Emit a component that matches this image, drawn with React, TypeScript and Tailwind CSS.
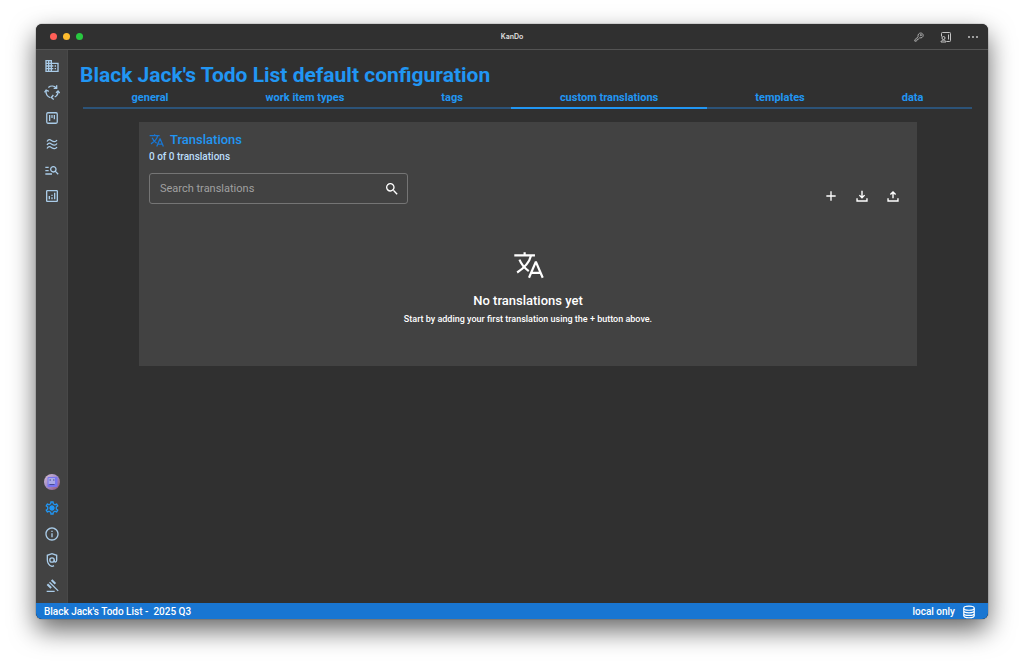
import type { ReactNode } from 'react';
import { MdAdd, MdDomain, MdManageSearch, MdOutlineAnalytics, MdOutlineInfo, MdOutlineSettings, MdSearch } from 'react-icons/md';

interface IconProps {
  className?: string;
  width?: number;
  children: ReactNode;
}

function Icon({ className, width = 2, children }: IconProps) {
  return (
    <svg className={className} viewBox="0 0 24 24" fill="none" stroke="currentColor" strokeWidth={width} aria-hidden="true">
      {children}
    </svg>
  );
}

function TranslateIcon({ className, width }: { className?: string; width?: number }) {
  return (
    <Icon className={className} width={width}>
      <path d="M1 4.2h16M9 1.8v2.4M14 4.2C12.8 9 8.5 14 3.2 17.4M5 7.5c1.6 4 4 6.6 7.2 8.8M12.4 21.5l5.1-12h.4L23 21.5M14.2 17.7h7" />
    </Icon>
  );
}

function CycleIcon({ className }: { className?: string }) {
  return (
    <Icon className={className}>
      <path d="M6.500 5.200A9 9 0 0 1 18.500 6M21 11.500A9 9 0 0 1 16 19.500M9.500 20.500A9 9 0 0 1 3.200 10" />
      <path d="M.8 12.500 3.200 9l4 2M19 2v4.500h-4.500M14 16.500l-3 3.800 3.500 3M18 13l3-2.500 2.500 3" />
    </Icon>
  );
}

function BoardIcon({ className }: { className?: string }) {
  return (
    <Icon className={className} width={2.2}>
      <rect x="3" y="3" width="18" height="18" rx="2" />
      <path d="M8 7v10M12 7v5M16 7v7" />
    </Icon>
  );
}

function WavesIcon({ className }: { className?: string }) {
  return (
    <Icon className={className} width={2.6}>
      <path d="M2 7c3-5 6-4 9.500-1.500S19 8.500 22 4M2 14c3-5 6-4 9.500-1.500S19 15.500 22 11M2 21c3-5 6-4 9.500-1.500S19 22.500 22 18" />
    </Icon>
  );
}

function GearIcon({ className }: { className?: string }) {
  return (
    <svg className={className} viewBox="0 0 24 24" aria-hidden="true">
      <MdOutlineSettings size={24} />
      <circle cx="12" cy="12" r="3.5" fill="currentColor" />
    </svg>
  );
}

function PrivacyIcon({ className }: { className?: string }) {
  return (
    <Icon className={className}>
      <path d="M15 20.500c-1 .6-2 .9-3 1-4.500-1.500-7-5.500-7-10V5l7-2.500L19 5v7.500c0 3-3.500 3.500-3.500.5v-1.500" />
      <circle cx="12" cy="12" r="3.3" />
    </Icon>
  );
}

function GavelIcon({ className }: { className?: string }) {
  return (
    <svg className={className} viewBox="0 -960 960 960" fill="currentColor" aria-hidden="true">
      <path d="M160-120v-80h480v80H160Zm226-194L160-540l84-86 228 226-86 86Zm254-254L414-796l86-84 226 226-86 86Zm184 408L302-682l56-56 522 522-56 56Z" />
    </svg>
  );
}

function TrayIcon({ className, up = false }: { className?: string; up?: boolean }) {
  return (
    <Icon className={className} width={2.4}>
      <path d={up ? 'M12 16V5M7.500 9.500 12 5l4.500 4.500' : 'M12 3v12M7.500 10.500 12 15l4.500-4.500'} />
      <path d="M3.500 16v4.500h17V16" />
    </Icon>
  );
}

function DatabaseIcon({ className }: { className?: string }) {
  return (
    <Icon className={className}>
      <ellipse cx="12" cy="5.5" rx="9" ry="3.5" />
      <path d="M3 5.500v13c0 4.500 18 4.500 18 0v-13M3 10c0 4.500 18 4.500 18 0M3 14.500c0 4.500 18 4.500 18 0" />
    </Icon>
  );
}

function KeyIcon({ className }: { className?: string }) {
  return (
    <Icon className={className}>
      <path strokeLinejoin="round" d="M10 11.500C8.500 6 12 2.500 16 2.500c3.500 0 6 2.500 6 5.500 0 4.500-4 7-8.500 6L10 17.500H7.500V20L5 22H2v-3.500z" />
      <circle cx="16.5" cy="7.5" r="1.5" />
    </Icon>
  );
}

function PanelIcon({ className }: { className?: string }) {
  return (
    <Icon className={className}>
      <path d="M3 11V5c0-1.500.5-2 2-2h14c1.500 0 2 .5 2 2v14c0 1.500-.5 2-2 2h-6M17 7v10" />
      <circle cx="7" cy="14" r="3" />
      <path d="M2 22c0-5 10-5 10 0z" />
    </Icon>
  );
}

function Avatar() {
  return (
    <svg className="size-4" viewBox="0 0 16 16" aria-hidden="true">
      <defs>
        <linearGradient id="avatar" x1="0" y1="0" x2="1" y2="1">
          <stop offset="0" stopColor="#d9bfd0" />
          <stop offset="0.5" stopColor="#a08bc8" />
          <stop offset="1" stopColor="#9a5269" />
        </linearGradient>
      </defs>
      <circle cx="8" cy="8" r="8" fill="url(#avatar)" />
      <rect x="3.5" y="3" width="10" height="10" rx="1" fill="#7774ef" />
      <rect x="4.5" y="4" width="6.5" height="6" fill="#a9a9e6" />
      <path d="M5.500 6h1.500M9 6h1.500M5.500 10.500h5" stroke="#484b95" />
    </svg>
  );
}

const topNav = [
  { label: 'Projects', icon: <MdDomain className="size-4" /> },
  { label: 'Iterations', icon: <CycleIcon className="size-4" /> },
  { label: 'Board', icon: <BoardIcon className="size-3.5" /> },
  { label: 'Flow', icon: <WavesIcon className="size-3" /> },
  { label: 'Search', icon: <MdManageSearch className="size-4" /> },
  { label: 'Analytics', icon: <MdOutlineAnalytics className="size-4" /> },
];

const bottomNav = [
  { label: 'Profile', icon: <Avatar /> },
  { label: 'Settings', icon: <GearIcon className="size-4 text-[#2196f3]" /> },
  { label: 'About', icon: <MdOutlineInfo className="size-4" /> },
  { label: 'Privacy', icon: <PrivacyIcon className="size-4" /> },
  { label: 'Legal', icon: <GavelIcon className="size-4" /> },
];

const tabs = ['general', 'work item types', 'tags', 'custom translations', 'templates', 'data'];

function NavGroup({ items }: { items: typeof topNav }) {
  return (
    <div className="flex flex-col">
      {items.map((item) => (
        <button key={item.label} type="button" aria-label={item.label} className="flex h-[26px] items-center justify-center">
          {item.icon}
        </button>
      ))}
    </div>
  );
}

function TitleBar() {
  return (
    <header className="grid h-[26px] shrink-0 grid-cols-3 items-center border-b border-[#535353] px-[10px]">
      <div className="flex items-center gap-1.5 pl-1">
        <button type="button" aria-label="Close" className="size-[7px] rounded-full bg-[#ff5f57]" />
        <button type="button" aria-label="Minimize" className="size-[7px] rounded-full bg-[#febc2e]" />
        <button type="button" aria-label="Zoom" className="size-[7px] rounded-full bg-[#28c840]" />
      </div>
      <span className="pt-0.5 text-center font-[Inter] text-[7px] font-semibold text-[#e0e0e0]">KanDo</span>
      <div className="flex items-center justify-end gap-4 text-[#c4c4c4]">
        <button type="button" aria-label="Passwords"><KeyIcon className="size-2.5" /></button>
        <button type="button" aria-label="Side panel"><PanelIcon className="size-3" /></button>
        <button type="button" aria-label="More">
          <svg className="h-2 w-2.5" viewBox="0 0 10 8" fill="currentColor" aria-hidden="true">
            <circle cx="1" cy="4" r="1" />
            <circle cx="5" cy="4" r="1" />
            <circle cx="9" cy="4" r="1" />
          </svg>
        </button>
      </div>
    </header>
  );
}

function TranslationsCard() {
  return (
    <section className="mx-[71px] mt-[13px] bg-[#424242] px-[10px] pt-[10px] pb-[39px]">
      <h2 className="flex h-4 items-center gap-1.5 text-[13px] font-medium text-[#2196f3]">
        <TranslateIcon className="size-[15px] text-[#1976d2]" />
        Translations
      </h2>
      <p className="mt-px text-[10px] leading-4 font-medium text-[#bbdefb]">0 of 0 translations</p>

      <div className="mt-2 flex items-start justify-between">
        <label className="flex h-[31px] w-[259px] items-center rounded-[3px] border border-[#757575] pr-[7px] pl-[10px]">
          <input
            type="text"
            aria-label="Search translations"
            placeholder="Search translations"
            className="min-w-0 flex-1 bg-transparent pt-0.5 text-[11px] text-white outline-none placeholder:text-[#a0a0a0]"
          />
          <MdSearch className="size-4 text-white" />
        </label>
        <div className="mt-[15px] mr-[6px] flex gap-[15px] text-white">
          <button type="button" aria-label="Add translation"><MdAdd className="size-4" /></button>
          <button type="button" aria-label="Import translations" className="flex size-4 items-center justify-center"><TrayIcon className="size-3.5" /></button>
          <button type="button" aria-label="Export translations" className="flex size-4 items-center justify-center"><TrayIcon className="size-3.5" up /></button>
        </div>
      </div>

      <div className="mt-[46px] flex flex-col items-center text-center text-white">
        <TranslateIcon className="size-[31px]" width={1.7} />
        <h3 className="mt-[10px] text-[13px] leading-5 font-medium">No translations yet</h3>
        <p className="text-[9px] leading-4 font-medium">Start by adding your first translation using the + button above.</p>
      </div>
    </section>
  );
}

export default function App() {
  return (
    <div className="flex min-h-screen flex-col bg-white px-9 pt-6 pb-12 font-[Roboto,sans-serif]">
      <div className="flex flex-1 flex-col overflow-hidden rounded-md bg-[#303030] shadow-[0_0_1px_#000,0_11px_26px_rgba(0,0,0,0.6)]">
        <TitleBar />

        <div className="flex flex-1">
          <nav className="flex w-8 shrink-0 flex-col justify-between border-r border-[#484848] bg-[#424242] pt-[3px] pb-1 text-[#a9cbe8]">
            <NavGroup items={topNav} />
            <NavGroup items={bottomNav} />
          </nav>

          <main className="min-w-0 flex-1">
            <h1 className="pt-3 pl-3 text-[21px] leading-[26px] font-bold text-[#2196f3]">
              Black Jack's Todo List default configuration
            </h1>
            <div role="tablist" className="mr-4 ml-[15px] flex h-[21px] border-b-2 border-[#2c5378]">
              {tabs.map((tab) => (
                <button
                  key={tab}
                  type="button"
                  role="tab"
                  aria-selected={tab === 'custom translations'}
                  className="-mb-0.5 flex-auto border-b-2 border-transparent text-[11px] leading-4 font-bold text-[#2196f3] aria-selected:border-[#2196f3]"
                >
                  {tab}
                </button>
              ))}
            </div>
            <TranslationsCard />
          </main>
        </div>

        <footer className="flex h-4 shrink-0 items-center justify-between bg-[#1976d2] pr-3 pl-2 text-[10px] font-medium text-white">
          <span className="pt-px whitespace-pre">Black Jack's Todo List -  2025 Q3</span>
          <span className="flex items-center gap-[7px] pt-px">
            local only
            <DatabaseIcon className="size-3.5" />
          </span>
        </footer>
      </div>
    </div>
  );
}
